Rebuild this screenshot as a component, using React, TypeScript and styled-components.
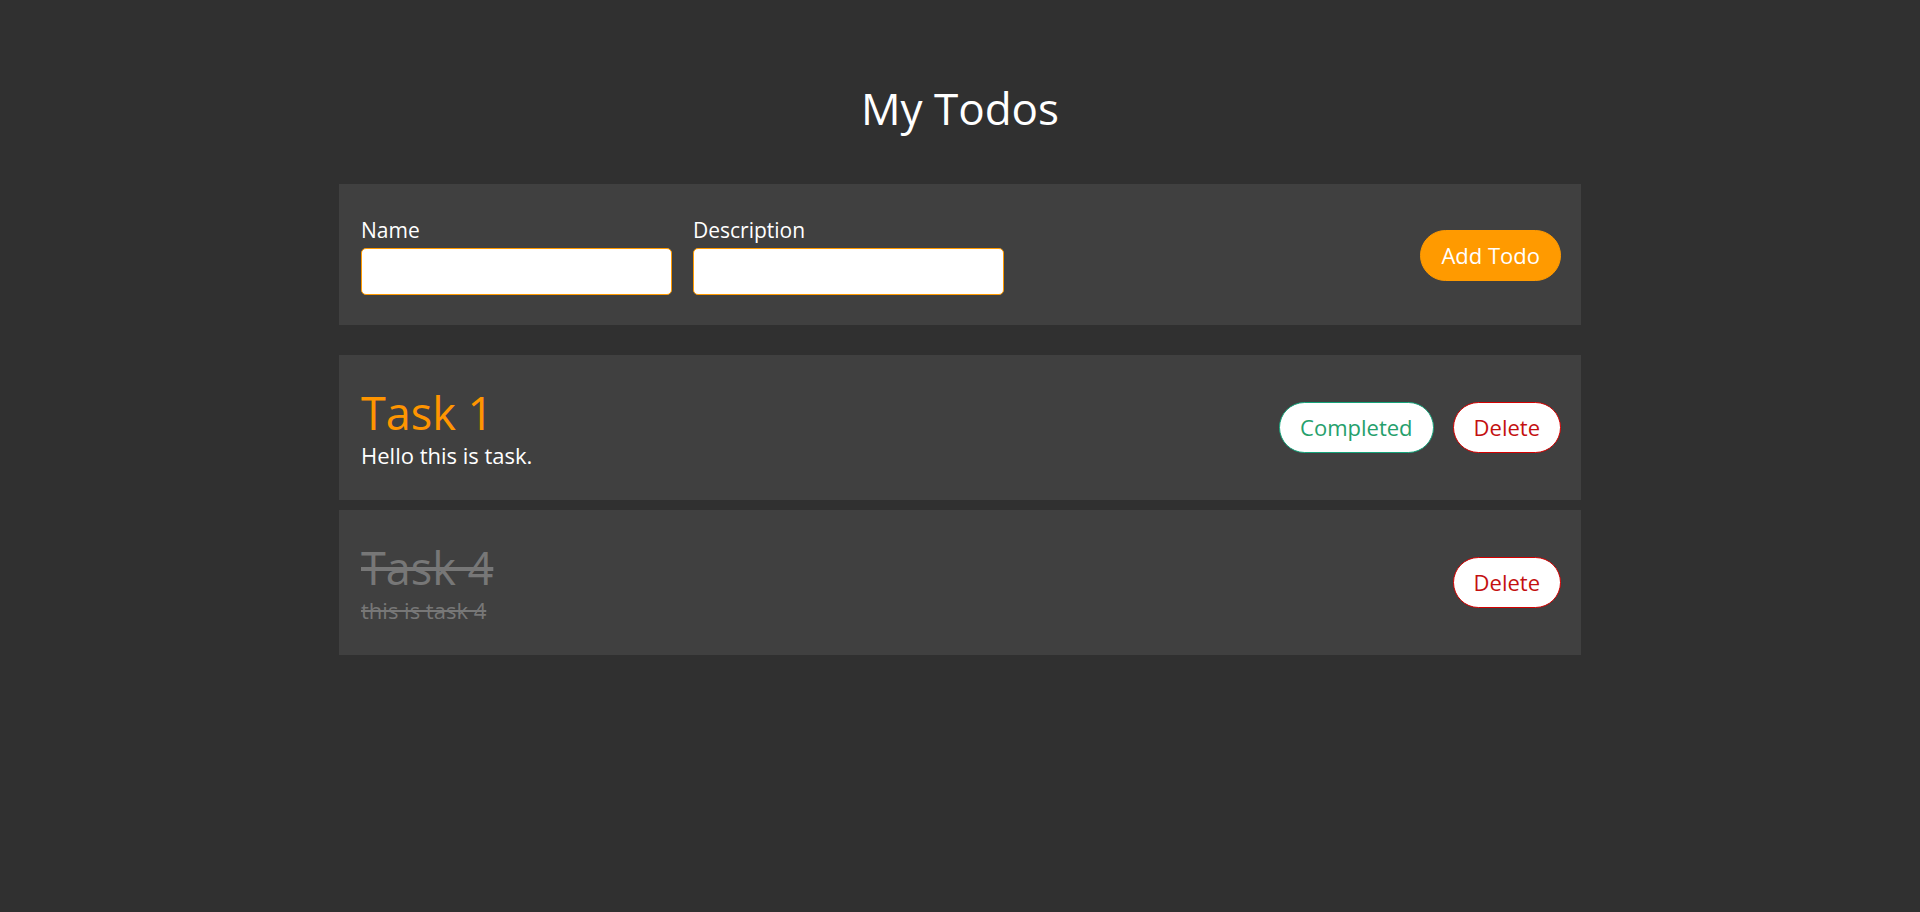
import React, { useState } from "react";
import styled, { createGlobalStyle } from "styled-components";

const GlobalStyle = createGlobalStyle`
  html, body {
    margin: 0;
    padding: 0;
    background: #303030;
    color: #fff;
    font-family: "Open Sans", "Noto Sans", "Liberation Sans", sans-serif;
  }
  * {
    box-sizing: border-box;
  }
`

type Todo = {
  id: number
  name: string
  description: string
  done: boolean
}

const Page = styled.div`
  min-height: 912px;
  padding-top: 81px;
`

const Container = styled.div`
  width: 1242px;
  margin: 0 auto;
`

const Title = styled.h1`
  margin: 0 0 49px;
  font-size: 44px;
  line-height: 54px;
  font-weight: 400;
  text-align: center;
  color: #fff;
`

const Panel = styled.div`
  background: #404040;
  padding: 31px 20px 30px 22px;
  display: flex;
  align-items: center;
`

const FormPanel = styled(Panel)`
  margin-bottom: 30px;
`

const Fields = styled.div`
  display: flex;
  gap: 21px;
`

const Field = styled.label`
  display: flex;
  flex-direction: column;
  gap: 3px;
  font-size: 21px;
  line-height: 30px;
  color: #fff;
`

const Input = styled.input`
  width: 311px;
  height: 47px;
  border: 1px solid #ff9a00;
  border-radius: 5px;
  background: #fff;
  font: inherit;
  font-size: 18px;
  padding: 0 10px;
  outline: none;
`

const PillButton = styled.button<{ $tone: "orange" | "green" | "red" }>`
  font-family: inherit;
  font-size: 22px;
  line-height: 29px;
  padding: 10px 20px;
  border-radius: 26px;
  cursor: pointer;
  border: 1px solid ${({ $tone }) => ({ orange: "#ff9a00", green: "#14a37a", red: "#d40000" })[$tone]};
  background: ${({ $tone }) => $tone == "orange" ? "#ff9a00" : "#fff"};
  color: ${({ $tone }) => ({ orange: "#fff", green: "#25a06c", red: "#c41010" })[$tone]};
`

const AddButton = styled(PillButton)`
  margin-left: auto;
`

const TodoList = styled.div`
  display: flex;
  flex-direction: column;
  gap: 10px;
`

const TodoCard = styled(Panel)`
  padding: 30px 20px 30px 22px;
  min-height: 145px;
`

const TodoText = styled.div<{ $done: boolean }>`
  display: flex;
  flex-direction: column;
  text-decoration: ${({ $done }) => $done ? "line-through" : "none"};
  color: ${({ $done }) => $done ? "#777" : "#fff"};
`

const TodoName = styled.div<{ $done: boolean }>`
  font-size: 45px;
  line-height: 54px;
  color: ${({ $done }) => $done ? "#777" : "#ff9500"};
`

const TodoDesc = styled.div`
  font-size: 22px;
  line-height: 30px;
`

const Actions = styled.div`
  margin-left: auto;
  display: flex;
  gap: 19px;
`

export default function App() {
  const [name, setName] = useState("")
  const [description, setDescription] = useState("")
  const [todos, setTodos] = useState<Todo[]>([
    { id: 1, name: "Task 1", description: "Hello this is task.", done: false },
    { id: 4, name: "Task 4", description: "this is task 4", done: true },
  ])

  const addTodo = () => {
    if (!name) return
    setTodos(ts => [...ts, { id: Date.now(), name, description, done: false }])
    setName("")
    setDescription("")
  }

  return (<>
    <GlobalStyle />
    <Page>
      <Container>
        <Title>My Todos</Title>
        <FormPanel>
          <Fields>
            <Field>
              Name
              <Input value={name} onChange={e => setName(e.target.value)} />
            </Field>
            <Field>
              Description
              <Input value={description} onChange={e => setDescription(e.target.value)} />
            </Field>
          </Fields>
          <AddButton $tone="orange" onClick={addTodo}>Add Todo</AddButton>
        </FormPanel>
        <TodoList>
          {todos.map(t => (
            <TodoCard key={t.id}>
              <TodoText $done={t.done}>
                <TodoName $done={t.done}>{t.name}</TodoName>
                <TodoDesc>{t.description}</TodoDesc>
              </TodoText>
              <Actions>
                {!t.done && (
                  <PillButton $tone="green" onClick={() => setTodos(ts => ts.map(x => x.id == t.id ? { ...x, done: true } : x))}>
                    Completed
                  </PillButton>
                )}
                <PillButton $tone="red" onClick={() => setTodos(ts => ts.filter(x => x.id != t.id))}>
                  Delete
                </PillButton>
              </Actions>
            </TodoCard>
          ))}
        </TodoList>
      </Container>
    </Page>
  </>)
}
